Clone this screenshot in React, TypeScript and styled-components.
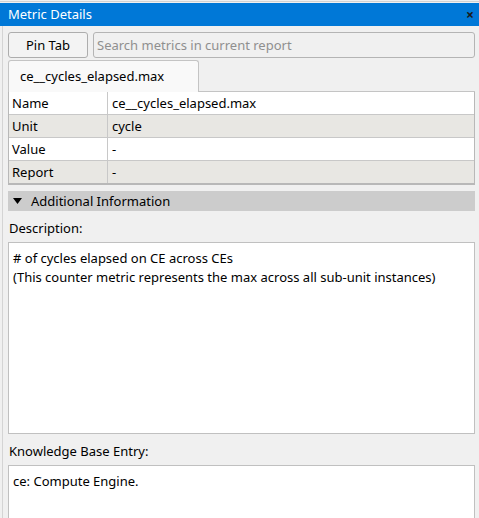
import styled, { createGlobalStyle } from "styled-components";

const GlobalStyle = createGlobalStyle`
  html, body {
    margin: 0;
    padding: 0;
    background: #f0f0f0;
  }
  body {
    font-family: "Noto Sans", "Open Sans", sans-serif;
    font-size: 13px;
    color: #000;
  }
`;

const rows = [
    { name: "Name", value: "ce__cycles_elapsed.max" },
    { name: "Unit", value: "cycle" },
    { name: "Value", value: "-" },
    { name: "Report", value: "-" },
];

const App = () => {
    return (
        <>
            <GlobalStyle />
            <Frame>
                <TitleBar>
                    <Title>Metric Details</Title>
                    <CloseMark>×</CloseMark>
                </TitleBar>
                <Body>
                    <Toolbar>
                        <PinButton>Pin Tab</PinButton>
                        <Search placeholder="Search metrics in current report" />
                    </Toolbar>
                    <TabBar>
                        <Tab>ce__cycles_elapsed.max</Tab>
                    </TabBar>
                    <Table>
                        {rows.map((r, i) => (
                            <Row key={r.name} $alt={i % 2 === 1}>
                                <KeyCell>{r.name}</KeyCell>
                                <ValueCell>{r.value}</ValueCell>
                            </Row>
                        ))}
                    </Table>
                    <SectionHeader>
                        <svg width="9" height="6" viewBox="0 0 9 6">
                            <path d="M0 0 L9 0 L4.5 6 Z" fill="#000" />
                        </svg>
                        <span>Additional Information</span>
                    </SectionHeader>
                    <Label>Description:</Label>
                    <TextBox $height={192}>
                        # of cycles elapsed on CE across CEs
                        <br />
                        (This counter metric represents the max across all sub-unit instances)
                    </TextBox>
                    <Label>Knowledge Base Entry:</Label>
                    <TextBox $height={70}>ce: Compute Engine.</TextBox>
                </Body>
            </Frame>
        </>
    );
};
export default App;


const Frame = styled.div`
    margin-top: 1px;
    border-top: 1px solid #d2d2d2;
    padding-top: 1px;
    height: 515px;
    overflow: hidden;
`;

const TitleBar = styled.div`
    display: flex;
    align-items: center;
    justify-content: space-between;
    height: 23px;
    background: #0078d7;
    color: #fff;
    padding: 0 5px 0 8px;
`;

const Title = styled.span`
    font-size: 13px;
    line-height: 23px;
`;

const CloseMark = styled.span`
    color: #1a1a1a;
    font-size: 14px;
    font-weight: bold;
    line-height: 23px;
`;

const Body = styled.div`
    display: flex;
    flex-direction: column;
    margin-left: 2px;
    border-left: 1px solid #d4d4d4;
    padding: 6px 4px 0 5px;
`;

const Toolbar = styled.div`
    display: flex;
    gap: 5px;
    height: 26px;
`;

const PinButton = styled.button`
    width: 80px;
    height: 26px;
    font-family: inherit;
    font-size: 13px;
    color: #000;
    background: #f3f3f3;
    border: 1px solid #adadad;
    border-radius: 3px;
    padding: 0;
`;

const Search = styled.input`
    flex: 1;
    height: 26px;
    box-sizing: border-box;
    font-family: inherit;
    font-size: 13px;
    background: #f0f0f0;
    border: 1px solid #b4b4b4;
    border-radius: 3px;
    padding: 0 3px;
    &::placeholder {
        color: #8f8f8f;
    }
`;

const TabBar = styled.div`
    display: flex;
    margin-top: 2px;
    height: 31px;
    border-bottom: 1px solid #c4c4c4;
`;

const Tab = styled.div`
    width: 191px;
    box-sizing: border-box;
    background: #f9f9f9;
    border: 1px solid #c4c4c4;
    border-bottom: none;
    border-radius: 3px 3px 0 0;
    padding-left: 11px;
    line-height: 30px;
    margin-bottom: -1px;
    height: 32px;
`;

const Table = styled.div`
    display: flex;
    flex-direction: column;
    border: 1px solid #b8b8b8;
    border-top: none;
    border-bottom-width: 2px;
`;

const Row = styled.div<{ $alt: boolean }>`
    display: flex;
    height: 22px;
    background: ${(p) => (p.$alt ? "#e8e7e3" : "#ffffff")};
    border-bottom: 1px solid #c8c8c8;
    &:last-child {
        border-bottom: none;
    }
`;

const KeyCell = styled.div`
    width: 99px;
    padding-left: 3px;
    line-height: 22px;
    border-right: 1px solid #c8c8c8;
    box-sizing: border-box;
`;

const ValueCell = styled.div`
    flex: 1;
    padding-left: 4px;
    line-height: 22px;
`;

const SectionHeader = styled.div`
    display: flex;
    align-items: center;
    gap: 9px;
    margin-top: 6px;
    height: 20px;
    background: #cccccc;
    padding-left: 5px;
`;

const Label = styled.div`
    height: 31px;
    line-height: 34px;
    padding-left: 1px;
    flex-shrink: 0;
`;

const TextBox = styled.div<{ $height: number }>`
    height: ${(p) => p.$height}px;
    box-sizing: border-box;
    background: #fff;
    border: 1px solid #c0c0c0;
    padding: 6px 4px;
    line-height: 19px;
    flex-shrink: 0;
`;
